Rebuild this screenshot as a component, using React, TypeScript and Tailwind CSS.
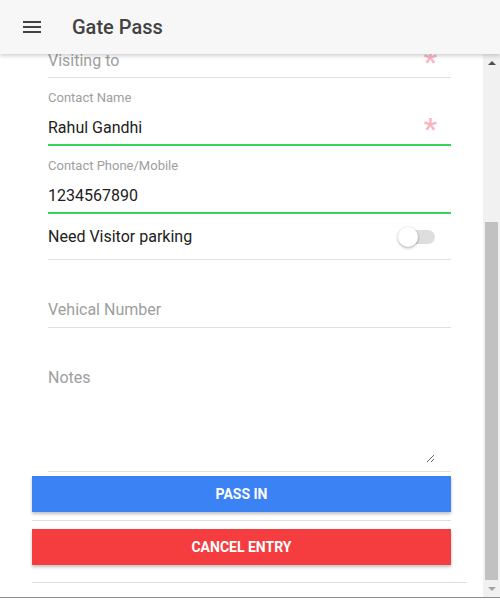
import { ReactNode } from 'react'

const font = { fontFamily: 'Roboto, "Noto Sans", Arial, sans-serif' }

function Asterisk() {
  return (
    <span className="absolute right-[14px] top-[36px] text-[30px] font-medium leading-none text-[#f9b4c1] select-none">
      *
    </span>
  )
}

function Field({
  label,
  value,
  placeholder,
  required,
  active,
}: {
  label?: string
  value?: string
  placeholder?: string
  required?: boolean
  active?: boolean
}) {
  return (
    <div
      className={`relative pt-3 ${
        active ? 'pb-[6px] border-b-2 border-[#33d35c]' : 'pb-[6px] border-b border-[#e0e0e0]'
      }`}
    >
      <div className="h-4 text-[13px] leading-4 text-[#9e9e9e]">{label}</div>
      <input
        readOnly
        value={value ?? ''}
        placeholder={placeholder}
        className="mt-3 block h-5 w-full pr-10 text-[16px] leading-5 text-[#212121] outline-none bg-transparent placeholder:text-[#9e9e9e]"
      />
      {required && <Asterisk />}
    </div>
  )
}

function Button({ children, color }: { children: ReactNode; color: string }) {
  return (
    <button
      className={`flex h-9 w-full items-center justify-center text-[14px] font-bold text-white shadow-[0_2px_3px_rgba(0,0,0,0.25)] ${color}`}
    >
      {children}
    </button>
  )
}

export default function App() {
  return (
    <div className="flex h-[600px] w-[500px] flex-col overflow-hidden bg-white" style={font}>
      <header className="relative z-10 flex h-[54px] shrink-0 items-center bg-[#f7f7f7] shadow-[0_2px_4px_rgba(0,0,0,0.18)]">
        <svg className="ml-5 h-6 w-6" viewBox="0 0 24 24" fill="#424242">
          <path d="M3 18h18v-2H3v2zm0-5h18v-2H3v2zm0-7v2h18V6H3z" />
        </svg>
        <h1 className="ml-7 text-[20px] font-medium text-[#424242]">Gate Pass</h1>
      </header>

      <div className="flex min-h-0 flex-1">
        <div className="min-w-0 flex-1 overflow-hidden pl-8 pr-4">
          <div className="-mt-[43px]">
            <div className="px-4">
              <Field placeholder="Visiting to" required />
              <Field label="Contact Name" value="Rahul Gandhi" required active />
              <Field label="Contact Phone/Mobile" value="1234567890" active />

              <div className="flex h-[46px] items-center justify-between border-b border-[#e0e0e0]">
                <span className="text-[16px] text-[#212121]">Need Visitor parking</span>
                <div className="relative mr-4 h-5 w-[37px]">
                  <div className="absolute right-0 top-[3px] h-[14px] w-[34px] rounded-full bg-[#dedede]" />
                  <div className="absolute left-0 top-0 h-5 w-5 rounded-full bg-white shadow-[0_1px_3px_rgba(0,0,0,0.35)]" />
                </div>
              </div>

              <div className="pt-3 pb-[7px] border-b border-[#e0e0e0]">
                <div className="h-4" />
                <input
                  readOnly
                  placeholder="Vehical Number"
                  className="mt-3 block h-5 w-full text-[16px] leading-5 outline-none placeholder:text-[#9e9e9e]"
                />
              </div>

              <div className="pt-3 pb-2 border-b border-[#e0e0e0]">
                <div className="h-4" />
                <textarea
                  readOnly
                  placeholder="Notes"
                  className="mt-3 mr-4 block h-[95px] w-[calc(100%-16px)] text-[16px] leading-5 outline-none placeholder:text-[#9e9e9e]"
                />
              </div>
            </div>

            <div className="mt-1 mr-4 border-b border-[#e0e0e0] pb-2">
              <Button color="bg-[#3b82f5]">PASS IN</Button>
            </div>
            <div className="border-b border-[#e0e0e0]">
              <div className="mr-4 pt-2 pb-[17px]">
                <Button color="bg-[#f53c3f]">CANCEL ENTRY</Button>
              </div>
            </div>
          </div>
        </div>

        <div className="flex w-[17px] shrink-0 flex-col bg-[#f1f1f1]">
          <div className="flex h-[17px] items-center justify-center">
            <div className="h-0 w-0 border-x-[4px] border-b-[4px] border-x-transparent border-b-[#505050]" />
          </div>
          <div className="h-[151px]" />
          <div className="mx-[2px] h-[358px] bg-[#c1c1c1]" />
          <div className="flex-1" />
          <div className="flex h-[17px] items-center justify-center">
            <div className="h-0 w-0 border-x-[4px] border-t-[4px] border-x-transparent border-t-[#a3a3a3]" />
          </div>
        </div>
      </div>

      <div className="h-[3px] shrink-0 border-t border-[#8c8c8c] bg-white" />
    </div>
  )
}
